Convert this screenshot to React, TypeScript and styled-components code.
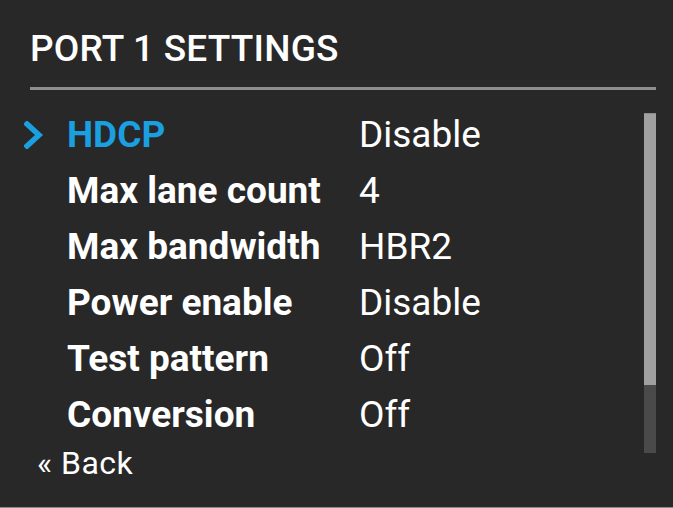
import styled, { createGlobalStyle } from "styled-components";

const GlobalStyle = createGlobalStyle`
  html, body {
    margin: 0;
    padding: 0;
    background: #282828;
  }
  body {
    font-family: Roboto, "Liberation Sans", sans-serif;
    color: #ffffff;
  }
`;

const settings = [
  { label: "HDCP", value: "Disable" },
  { label: "Max lane count", value: "4" },
  { label: "Max bandwidth", value: "HBR2" },
  { label: "Power enable", value: "Disable" },
  { label: "Test pattern", value: "Off" },
  { label: "Conversion", value: "Off" },
];

const Screen = styled.div`
  width: 673px;
  height: 508px;
  box-sizing: border-box;
  background: #282828;
  border-bottom: 1px solid #8a8a8a;
  overflow: hidden;
`;

const Header = styled.div`
  padding: 29px 17px 0 30px;
`;

const Title = styled.h1`
  margin: 0;
  font-size: 37px;
  line-height: 40px;
  font-weight: 500;
  letter-spacing: 0.2px;
  color: #ffffff;
  white-space: nowrap;
`;

const Divider = styled.div`
  height: 3px;
  margin-top: 18px;
  background: #8e8e8e;
`;

const Body = styled.div`
  display: flex;
  align-items: flex-start;
  height: 336px;
  margin-top: 17px;
`;

const List = styled.div`
  flex: 1;
  display: flex;
  flex-direction: column;
`;

const Row = styled.div`
  display: grid;
  grid-template-columns: 43px 292px 1fr;
  height: 56px;
  align-items: center;
  padding-left: 24px;
`;

const Marker = styled.div`
  display: flex;
  align-items: center;
`;

const Label = styled.span<{ $active?: boolean }>`
  font-size: 37px;
  line-height: 56px;
  font-weight: 700;
  color: ${(p) => (p.$active ? "#1a9fe0" : "#ffffff")};
  white-space: nowrap;
`;

const Value = styled.span`
  font-size: 37px;
  line-height: 56px;
  font-weight: 400;
  color: #ffffff;
  white-space: nowrap;
`;

const Scrollbar = styled.div`
  flex: none;
  width: 12px;
  height: 340px;
  margin: 6px 17px 0 0;
  background: #4a4a4a;
  display: flex;
  flex-direction: column;
`;

const Thumb = styled.div`
  height: 272px;
  background: #a0a0a0;
  border-top: 1px solid #8a8a8a;
  box-sizing: border-box;
`;

const Back = styled.div`
  padding-left: 37px;
  font-size: 32px;
  line-height: 40px;
  letter-spacing: 0.5px;
  color: #ffffff;
`;

const Chevron = () => (
  <svg width="20" height="28" viewBox="0 0 20 28">
    <polyline
      points="3,3 15,14 3,25"
      fill="none"
      stroke="#1a9fe0"
      strokeWidth="5.5"
      strokeLinecap="square"
    />
  </svg>
);

export default function App() {
  return (
    <Screen>
      <GlobalStyle />
      <Header>
        <Title>PORT 1 SETTINGS</Title>
        <Divider />
      </Header>
      <Body>
        <List>
          {settings.map((s, i) => (
            <Row key={s.label}>
              <Marker>{i === 0 && <Chevron />}</Marker>
              <Label $active={i === 0}>{s.label}</Label>
              <Value>{s.value}</Value>
            </Row>
          ))}
        </List>
        <Scrollbar>
          <Thumb />
        </Scrollbar>
      </Body>
      <Back>« Back</Back>
    </Screen>
  );
}
